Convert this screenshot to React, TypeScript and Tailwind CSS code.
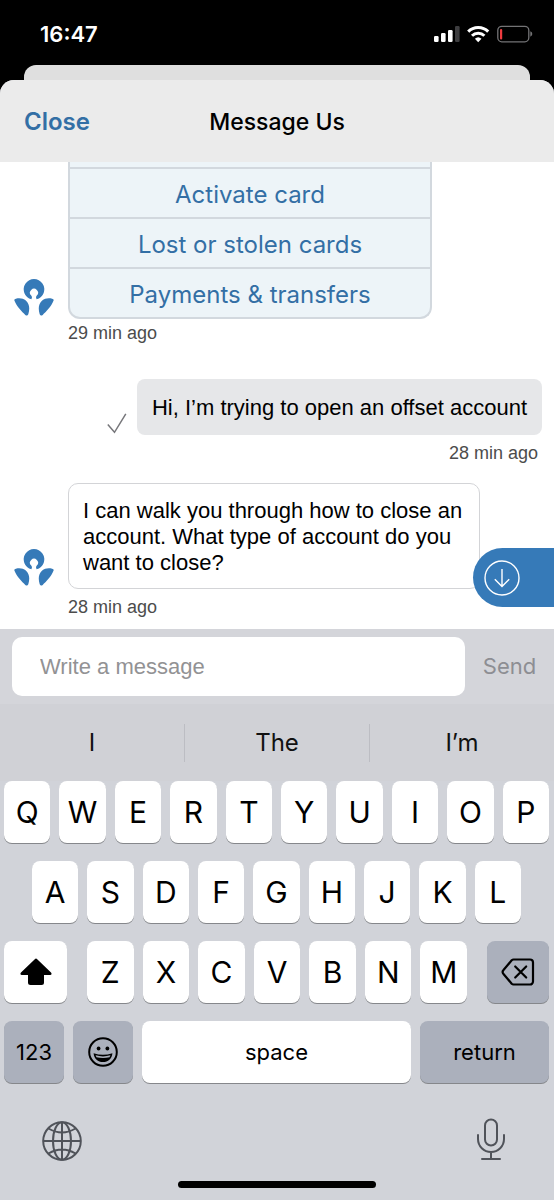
import type { ReactNode } from "react";

const quickReplies = ["Activate card", "Lost or stolen cards", "Payments & transfers"];
const suggestions = ["I", "The", "I’m"];
const topRow = "QWERTYUIOP".split("");
const homeRow = "ASDFGHJKL".split("");
const bottomRow = "ZXCVBNM".split("");

function StatusBar() {
  return (
    <div className="flex h-[65px] items-center justify-between pt-0.5 pr-[21px] pl-[40px]">
      <time className="text-[22px] leading-7 font-semibold text-white">16:47</time>
      <svg width="100" height="20" viewBox="0 0 100 20" role="img" aria-label="Signal, Wi-Fi, low battery">
        <rect x="1" y="12" width="4.6" height="6" rx="1.2" fill="#fff" />
        <rect x="8" y="9" width="4.6" height="9" rx="1.2" fill="#fff" />
        <rect x="15" y="6" width="4.6" height="12" rx="1.2" fill="#fff" />
        <rect x="22" y="2" width="4.6" height="16" rx="1.2" fill="#3e3e40" />
        <g fill="none" stroke="#fff" strokeWidth="3">
          <path d="M35.2 7.600a14 14 0 0 1 20 0" />
          <path d="M39 11.800a8.800 8.800 0 0 1 12.400 0" />
        </g>
        <path d="M41.900 14.800a4.800 4.800 0 0 1 6.600 0L45.200 18.200z" fill="#fff" />
        <rect x="64.800" y="2.300" width="31" height="15.500" rx="4" fill="none" stroke="#737375" strokeWidth="1.300" />
        <rect x="67" y="5" width="2.200" height="10.500" rx="1" fill="#ef3b3f" />
        <path d="M97.300 7.300q2 .8 2 2.700t-2 2.700z" fill="#737375" />
      </svg>
    </div>
  );
}

function Avatar() {
  return (
    <svg className="mb-[3px] shrink-0" width="40" height="37" viewBox="0 0 40 37" role="img" aria-label="Assistant">
      <g fill="#367ab8">
        <path d="M17.400 20.300A10.300 10.300 0 1 1 22.600 20.300C21.800 18.600 21.800 17.800 22.800 16.600A4 4 0 1 0 17.200 16.600C18.200 17.800 18.200 18.600 17.400 20.300Z" />
        <path d="M.4 21.600Q-.1 20.100 1.900 19.700C5.500 18.800 9.300 19.300 11.800 21.600C15.700 25.200 15.900 30 14.300 35.200Q13.300 37.300 11.300 35.900C8 32.800 2.800 27.800 .4 21.600Z" />
        <path d="M39.600 21.600Q40.100 20.100 38.100 19.700C34.500 18.800 30.700 19.300 28.200 21.600C24.300 25.200 24.100 30 25.700 35.200Q26.700 37.300 28.700 35.900C32 32.800 37.200 27.800 39.600 21.600Z" />
      </g>
    </svg>
  );
}

function Timestamp({ children }: { children: ReactNode }) {
  return <p className="text-[18px] leading-7 text-[#4c4c4c]">{children}</p>;
}

function Key({ label }: { label: string }) {
  return (
    <button
      type="button"
      className="flex h-[62px] min-w-0 flex-1 items-center justify-center rounded-lg bg-white text-[30px] text-black shadow-[0_1px_0_#85878b]"
    >
      {label}
    </button>
  );
}

function Chat() {
  return (
    <main className="relative bg-white pb-2 font-['Liberation_Sans',sans-serif]">
      <div className="flex items-end gap-3.5 pl-3.5">
        <Avatar />
        <ul className="w-[364px] overflow-hidden rounded-b-xl border-2 border-t-0 border-[#d2d8de] bg-[#edf4f8] pt-[5px] font-['Inter',sans-serif]">
          {quickReplies.map((reply) => (
            <li key={reply} className="border-t-2 border-[#d2d8de]">
              <button type="button" className="h-12 w-full pt-1 text-[24px] text-[#336fa5]">
                {reply}
              </button>
            </li>
          ))}
        </ul>
      </div>
      <div className="pl-[68px]">
        <Timestamp>29 min ago</Timestamp>
      </div>

      <div className="mt-8 flex items-end justify-end gap-2.5 pr-3">
        <svg width="20" height="22" viewBox="0 0 20 22" fill="none" stroke="#77777b" strokeWidth="1.500" role="img" aria-label="Sent">
          <path d="M.8 11.500 7.500 19.300 18.800.8" />
        </svg>
        <p className="flex h-14 items-center rounded-lg bg-[#e6e7e9] px-[15px] text-[22px] text-black">
          Hi, I’m trying to open an offset account
        </p>
      </div>
      <div className="mt-1 flex justify-end pr-4">
        <Timestamp>28 min ago</Timestamp>
      </div>

      <div className="mt-4 flex items-end gap-3.5 pl-3.5">
        <Avatar />
        <p className="w-[412px] rounded-[10px] border border-[#d3d4d7] px-3.5 pt-3.5 pb-3 text-[22px] leading-[26px] text-black">
          I can walk you through how to close an account. What type of account do you want to close?
        </p>
      </div>
      <div className="mt-1 pl-[68px]">
        <Timestamp>28 min ago</Timestamp>
      </div>

      <button
        type="button"
        aria-label="Scroll to latest"
        className="absolute right-0 bottom-[22px] h-[59px] w-[81px] rounded-l-full bg-[#367ab8] pl-[11px]"
      >
        <svg width="36" height="36" viewBox="0 0 36 36" fill="none" stroke="#fff" strokeWidth="1.400">
          <circle cx="18" cy="18" r="17" />
          <path d="M18 9v17.500M10.800 19.300l7.200 7.200 7.200-7.200" />
        </svg>
      </button>
    </main>
  );
}

function Composer() {
  return (
    <form className="flex items-center bg-[#d4d5da] py-2 pl-3" onSubmit={(e) => e.preventDefault()}>
      <input
        type="text"
        aria-label="Message"
        placeholder="Write a message"
        className="h-[59px] min-w-0 flex-1 rounded-[10px] bg-white px-7 font-['Liberation_Sans',sans-serif] text-[22px] text-black outline-none placeholder:text-[#929294]"
      />
      <button type="submit" className="w-[89px] text-[22px] text-[#8d8e93]">
        Send
      </button>
    </form>
  );
}

function Keyboard() {
  return (
    <section aria-label="Keyboard" className="bg-[#d1d3d9]">
      <div className="flex h-[77px] items-center bg-[#d0d1d6]">
        {suggestions.map((word) => (
          <button
            key={word}
            type="button"
            className="h-[38px] flex-1 border-r border-[#bcbdc3] text-[24px] text-[#111] last:border-r-0"
          >
            {word}
          </button>
        ))}
      </div>

      <div className="flex flex-col gap-[18px] pr-[5px] pl-1">
        <div className="flex gap-[9px]">
          {topRow.map((k) => (
            <Key key={k} label={k} />
          ))}
        </div>
        <div className="flex gap-[9px] px-7">
          {homeRow.map((k) => (
            <Key key={k} label={k} />
          ))}
        </div>
        <div className="flex gap-5">
          <button
            type="button"
            aria-label="Shift"
            className="flex h-[62px] w-[63px] items-center justify-center rounded-lg bg-white shadow-[0_1px_0_#85878b]"
          >
            <svg width="32" height="28" viewBox="0 0 32 28" fill="#000">
              <path d="M14.800 1.200q1.200-1.200 2.400 0L31 14.400c1 1 .6 2.600-.8 2.600H24v7.500a2.500 2.500 0 0 1-2.500 2.500h-11A2.500 2.500 0 0 1 8 24.500V17H1.800C.4 17 0 15.400 1 14.400Z" />
            </svg>
          </button>
          <div className="flex min-w-0 flex-1 gap-[9px]">
            {bottomRow.map((k) => (
              <Key key={k} label={k} />
            ))}
          </div>
          <button
            type="button"
            aria-label="Delete"
            className="flex h-[62px] w-[62px] items-center justify-center rounded-lg bg-[#abb0bc] shadow-[0_1px_0_#85878b]"
          >
            <svg width="34" height="28" viewBox="0 0 34 28" fill="none" stroke="#000" strokeWidth="2.200" strokeLinecap="round" strokeLinejoin="round">
              <path d="M12.500 1.500H29a3 3 0 0 1 3 3V23.500a3 3 0 0 1-3 3H12.500q-1 0-1.800-.8L2.500 16q-1.800-2 0-4L10.700 2.300q.8-.8 1.800-.8Z" />
              <path d="m14.200 8.500 11 11m0-11-11 11" />
            </svg>
          </button>
        </div>
        <div className="flex gap-[9px] text-[22px] text-black">
          <button type="button" className="h-[62px] w-[60px] rounded-lg bg-[#abb0bc] shadow-[0_1px_0_#85878b]">
            123
          </button>
          <button
            type="button"
            aria-label="Emoji"
            className="flex h-[62px] w-[60px] items-center justify-center rounded-lg bg-[#abb0bc] shadow-[0_1px_0_#85878b]"
          >
            <svg width="30" height="30" viewBox="0 0 30 30">
              <circle cx="15" cy="15" r="13.800" fill="none" stroke="#000" strokeWidth="2" />
              <circle cx="10.600" cy="11.500" r="1.900" />
              <circle cx="19.400" cy="11.500" r="1.900" />
              <path d="M5.600 16.200Q15 19.500 24.400 16.200C24 21.600 20 25 15 25S6 21.600 5.600 16.200Z" />
              <path d="M7.600 18.300Q15 20.500 22.400 18.300Q22 19.500 21.500 20.200Q15 21.800 8.500 20.200Q8 19.500 7.600 18.300Z" fill="#abb0bc" />
            </svg>
          </button>
          <button type="button" className="h-[62px] flex-1 rounded-lg bg-white shadow-[0_1px_0_#85878b]">
            space
          </button>
          <button type="button" className="h-[62px] w-[129px] rounded-lg bg-[#abb0bc] shadow-[0_1px_0_#85878b]">
            return
          </button>
        </div>
      </div>

      <div className="flex items-center justify-between pt-[34px] pr-[47px] pl-[42px]">
        <button type="button" aria-label="Next keyboard">
          <svg width="40" height="44" viewBox="0 0 40 44" fill="none" stroke="#50535a" strokeWidth="2">
            <circle cx="20" cy="24" r="18.800" />
            <ellipse cx="20" cy="24" rx="9" ry="18.800" />
            <path d="M20 5.200v37.600M1.200 24h37.600M6.500 11.500Q20 19.500 33.500 11.500M6.500 36.500Q20 28.500 33.500 36.500" />
          </svg>
        </button>
        <button type="button" aria-label="Dictate">
          <svg width="32" height="44" viewBox="0 0 32 44" fill="none" stroke="#50535a" strokeWidth="2" strokeLinecap="round">
            <rect x="10" y="2.500" width="12" height="26" rx="6" />
            <path d="M3 18v4a13 13 0 0 0 26 0v-4M16 35v7M7 42h18" />
          </svg>
        </button>
      </div>
      <div className="pt-5 pb-3">
        <div className="mx-auto h-[7px] w-[198px] rounded-full bg-black" />
      </div>
    </section>
  );
}

export default function App() {
  return (
    <div className="min-h-screen bg-black font-['Inter',sans-serif]">
      <StatusBar />
      <div className="mx-6 h-[15px] rounded-t-xl bg-[#dfdfdf]" />
      <div className="overflow-hidden rounded-t-[14px] bg-[#d1d3d9]">
        <header className="grid h-[82px] grid-cols-[1fr_auto_1fr] items-center bg-[#ebebeb] px-6 pt-0.5">
          <button type="button" className="justify-self-start text-[24px] font-semibold text-[#336fa5]">
            Close
          </button>
          <h1 className="text-[23px] font-medium text-black">Message Us</h1>
        </header>
        <Chat />
        <Composer />
        <Keyboard />
      </div>
    </div>
  );
}
